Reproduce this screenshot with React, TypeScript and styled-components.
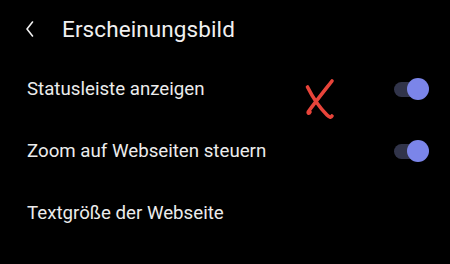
import styled, { createGlobalStyle } from 'styled-components'

const GlobalStyle = createGlobalStyle`
  html, body {
    margin: 0;
    padding: 0;
    background: #000;
  }
  body {
    font-family: Roboto, 'Noto Sans', sans-serif;
    color: #ececec;
  }
`

const Screen = styled.div`
  position: relative;
  width: 450px;
  height: 264px;
  background: #000;
  overflow: hidden;
`

const Header = styled.div`
  height: 58px;
  display: flex;
  align-items: center;
  padding-left: 24px;
  gap: 25px;
`

const BackBtn = styled.div`
  width: 13px;
  height: 18px;
  display: flex;
  align-items: center;
`

const Title = styled.h1`
  margin: 0;
  font-size: 22.5px;
  font-weight: 400;
  color: #f0f0f0;
  letter-spacing: 0.1px;
`

const List = styled.ul`
  list-style: none;
  margin: 0;
  padding: 0;
`

const Row = styled.li`
  height: 62px;
  display: flex;
  align-items: center;
  justify-content: space-between;
  padding: 0 21px 0 27px;
`

const Label = styled.span`
  font-size: 18.7px;
  color: #ececec;
`

const Toggle = styled.div<{ $on: boolean }>`
  position: relative;
  width: 35px;
  height: 22px;
  &::before {
    content: '';
    position: absolute;
    left: 0;
    top: 4px;
    width: 28px;
    height: 15px;
    border-radius: 8px;
    background: #31344a;
  }
  &::after {
    content: '';
    position: absolute;
    top: 0;
    left: ${p => (p.$on ? '13px' : '0')};
    width: 22px;
    height: 22px;
    border-radius: 50%;
    background: #7b85e9;
  }
`

const Mark = styled.svg`
  position: absolute;
  left: 303px;
  top: 78px;
`

const rows = [
  { label: 'Statusleiste anzeigen', toggle: true },
  { label: 'Zoom auf Webseiten steuern', toggle: true },
  { label: 'Textgröße der Webseite', toggle: false },
]

export default function App() {
  return (
    <Screen>
      <GlobalStyle />
      <Header>
        <BackBtn>
          <svg width="13" height="18" viewBox="0 0 13 18">
            <path d="M8.5 2 L3 9 L8.5 16" stroke="#f0f0f0" strokeWidth="1.6" fill="none" strokeLinecap="round" strokeLinejoin="round" />
          </svg>
        </BackBtn>
        <Title>Erscheinungsbild</Title>
      </Header>
      <List>
        {rows.map(r => (
          <Row key={r.label}>
            <Label>{r.label}</Label>
            {r.toggle && <Toggle $on />}
          </Row>
        ))}
      </List>
      <Mark width="34" height="42" viewBox="0 0 34 42">
        <path d="M29 3 C 22 12, 14 22, 5.5 33.5 C 4.5 35.5, 6 36, 7 34" stroke="#e8443a" strokeWidth="3.6" fill="none" strokeLinecap="round" />
        <path d="M4.5 9 C 9 18, 15 28, 24 37 C 26 39, 28 40, 29 38" stroke="#e8443a" strokeWidth="3.6" fill="none" strokeLinecap="round" />
      </Mark>
    </Screen>
  )
}
